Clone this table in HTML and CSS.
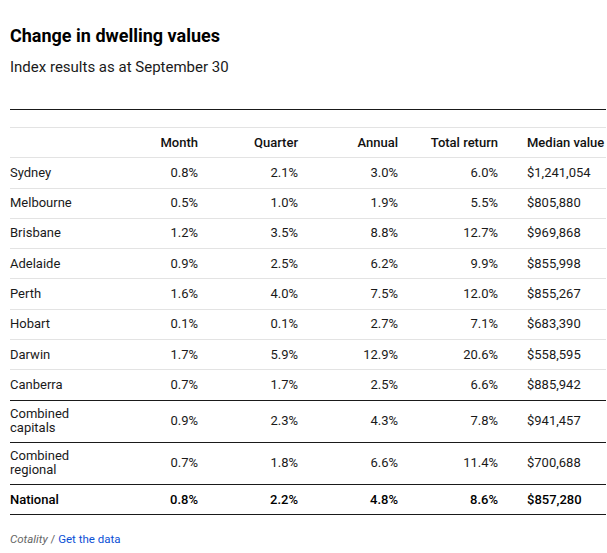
FILE: index.html
```html
<!DOCTYPE html>
<html lang="en">
<head>
    <meta charset="UTF-8">
    <meta name="viewport" content="width=device-width, initial-scale=1.0">
    <title>Change in dwelling values</title>
    <link rel="stylesheet" href="styles.css">
</head>
<body>
    <div class="chart">
        <div class="chart-head">
            <h1>Change in dwelling values</h1>
            <p class="subtitle">Index results as at September 30</p>
        </div>
        <table class="values">
            <colgroup>
                <col class="col-name">
                <col class="col-num">
                <col class="col-num">
                <col class="col-num">
                <col class="col-num">
                <col class="col-median">
            </colgroup>
            <thead>
                <tr>
                    <th></th>
                    <th class="num">Month</th>
                    <th class="num">Quarter</th>
                    <th class="num">Annual</th>
                    <th class="num">Total return</th>
                    <th class="median">Median value</th>
                </tr>
            </thead>
            <tbody>
                <tr><td>Sydney</td><td class="num">0.8%</td><td class="num">2.1%</td><td class="num">3.0%</td><td class="num">6.0%</td><td class="median">$1,241,054</td></tr>
                <tr><td>Melbourne</td><td class="num">0.5%</td><td class="num">1.0%</td><td class="num">1.9%</td><td class="num">5.5%</td><td class="median">$805,880</td></tr>
                <tr><td>Brisbane</td><td class="num">1.2%</td><td class="num">3.5%</td><td class="num">8.8%</td><td class="num">12.7%</td><td class="median">$969,868</td></tr>
                <tr><td>Adelaide</td><td class="num">0.9%</td><td class="num">2.5%</td><td class="num">6.2%</td><td class="num">9.9%</td><td class="median">$855,998</td></tr>
                <tr><td>Perth</td><td class="num">1.6%</td><td class="num">4.0%</td><td class="num">7.5%</td><td class="num">12.0%</td><td class="median">$855,267</td></tr>
                <tr><td>Hobart</td><td class="num">0.1%</td><td class="num">0.1%</td><td class="num">2.7%</td><td class="num">7.1%</td><td class="median">$683,390</td></tr>
                <tr><td>Darwin</td><td class="num">1.7%</td><td class="num">5.9%</td><td class="num">12.9%</td><td class="num">20.6%</td><td class="median">$558,595</td></tr>
                <tr class="rule"><td>Canberra</td><td class="num">0.7%</td><td class="num">1.7%</td><td class="num">2.5%</td><td class="num">6.6%</td><td class="median">$885,942</td></tr>
                <tr class="rule group"><td>Combined<br>capitals</td><td class="num">0.9%</td><td class="num">2.3%</td><td class="num">4.3%</td><td class="num">7.8%</td><td class="median">$941,457</td></tr>
                <tr class="rule group"><td>Combined<br>regional</td><td class="num">0.7%</td><td class="num">1.8%</td><td class="num">6.6%</td><td class="num">11.4%</td><td class="median">$700,688</td></tr>
                <tr class="rule total"><td>National</td><td class="num">0.8%</td><td class="num">2.2%</td><td class="num">4.8%</td><td class="num">8.6%</td><td class="median">$857,280</td></tr>
            </tbody>
        </table>
        <p class="source"><span class="source-name">Cotality</span> / <a href="#">Get the data</a></p>
    </div>
</body>
</html>
```

FILE: styles.css
```css
body {
    margin: 0;
    font-family: Roboto, "Liberation Sans", sans-serif;
    color: #1a1a1a;
    background: #fff;
}
.chart {
    padding: 0 1px 0 10px;
}
.chart-head {
    padding-top: 25px;
    padding-bottom: 32px;
    border-bottom: 1px solid #1a1a1a;
}
h1 {
    margin: 0;
    font-size: 18px;
    line-height: 22px;
    font-weight: 700;
    color: #000;
}
.subtitle {
    margin: 10px 0 0;
    font-size: 15px;
    line-height: 20px;
}
.values {
    width: 100%;
    margin-top: 17px;
    border-collapse: collapse;
    table-layout: fixed;
    font-size: 13px;
    line-height: 14px;
}
.col-name {
    width: 88px;
}
.col-num {
    width: 100px;
}
.values th,
.values td {
    padding: 7.65px 0;
    text-align: left;
    border-bottom: 1px solid #e3e3e3;
}
.values th {
    font-weight: 500;
    color: #111;
}
.values thead th {
    border-top: 1px solid #e3e3e3;
}
.values .num {
    text-align: right;
}
.values .median {
    padding-left: 29px;
}
.values tr.rule td {
    border-bottom-color: #1a1a1a;
}
.values tr.group td {
    padding-top: 6.6px;
    padding-bottom: 6.6px;
    line-height: 14px;
}
.values tr.total td {
    font-weight: 500;
    color: #000;
}
.source {
    margin: 17px 0 0;
    font-size: 11.5px;
    color: #666;
}
.source-name {
    font-style: italic;
}
.source a {
    color: #0b4fd6;
    text-decoration: none;
}
```
